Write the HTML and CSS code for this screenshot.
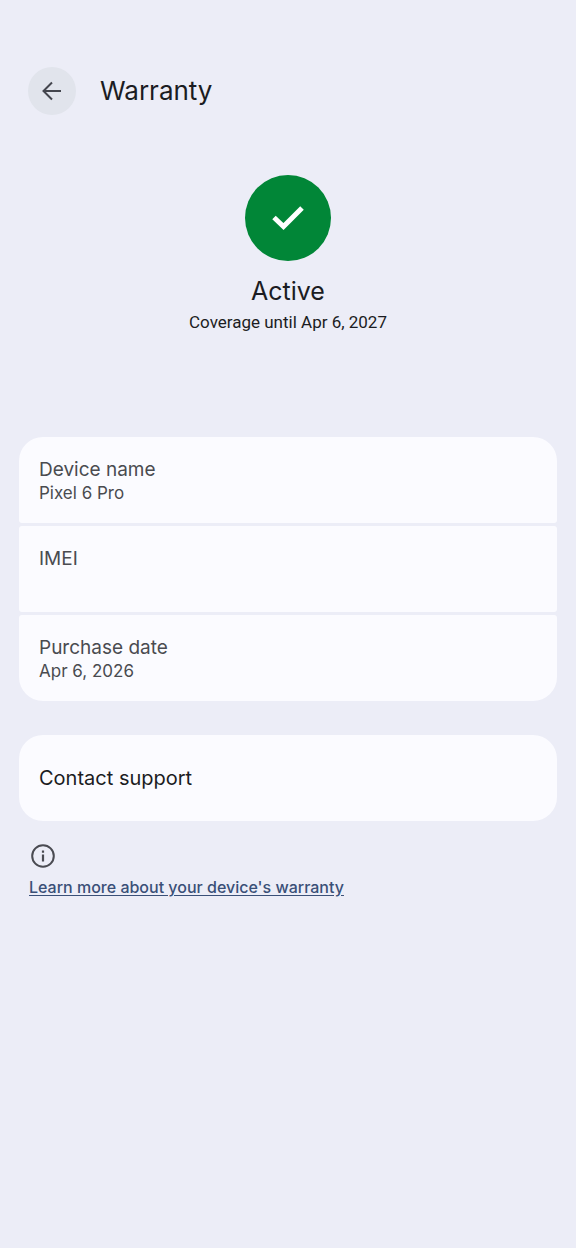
FILE: index.html
```html
<!DOCTYPE html>
<html lang="en">
<head>
<meta charset="utf-8">
<meta name="viewport" content="width=device-width, initial-scale=1">
<title>Warranty</title>
<link rel="stylesheet" href="styles.css">
</head>
<body>
<header class="app-bar">
  <button class="back" type="button" aria-label="Back">
    <svg viewBox="0 0 20 20" width="20" height="20" aria-hidden="true"><path d="M19 10H2M10 1.500 1.500 10l8.500 8.500"/></svg>
  </button>
  <h1 class="title">Warranty</h1>
</header>
<main class="content">
  <section class="status">
    <span class="badge">
      <svg viewBox="0 0 32 24" width="32" height="24" aria-hidden="true"><path d="M2 11.500 11.500 20.500 30 2"/></svg>
    </span>
    <h2 class="status-name">Active</h2>
    <p class="status-detail">Coverage until Apr 6, 2027</p>
  </section>
  <dl class="details">
    <div class="row"><dt class="label">Device name</dt><dd class="value">Pixel 6 Pro</dd></div>
    <div class="row"><dt class="label">IMEI</dt><dd class="value"></dd></div>
    <div class="row"><dt class="label">Purchase date</dt><dd class="value">Apr 6, 2026</dd></div>
  </dl>
  <button class="support" type="button">Contact support</button>
  <footer class="more">
    <svg class="info" viewBox="0 0 24 24" width="24" height="24" aria-hidden="true"><circle class="ring" cx="12" cy="12" r="10.800"/><path d="M10.900 10.500h2.200v7h-2.200zM10.900 6.500h2.200v2.200h-2.200z"/></svg>
    <a class="link" href="#">Learn more about your device's warranty</a>
  </footer>
</main>
</body>
</html>
```
FILE: styles.css
```css
* {
  box-sizing: border-box;
}

body {
  margin: 0;
  background: #ecedf7;
  color: #1b1c22;
  font-family: Inter, Roboto, sans-serif;
}

h1, h2, p, dl, dd {
  margin: 0;
  font-weight: 400;
}

button {
  border: 0;
  font-family: inherit;
  cursor: pointer;
}

.app-bar {
  display: flex;
  align-items: center;
  gap: 24px;
  padding: 67px 28px 0;
}

.back {
  display: grid;
  place-items: center;
  width: 48px;
  height: 48px;
  padding: 0;
  border-radius: 50%;
  background: #e1e4ec;
}

.back svg {
  fill: none;
  stroke: #44464e;
  stroke-width: 2;
}

.title {
  font-size: 26px;
  line-height: 32px;
}

.content {
  display: flex;
  flex-direction: column;
  padding: 60px 19px 0;
}

.status {
  display: flex;
  flex-direction: column;
  align-items: center;
}

.badge {
  display: grid;
  place-items: center;
  width: 86px;
  height: 86px;
  margin-bottom: 14px;
  border-radius: 50%;
  background: #018637;
}

.badge svg {
  fill: none;
  stroke: #fff;
  stroke-width: 5;
}

.status-name {
  font-size: 25px;
  line-height: 32px;
}

.status-detail {
  font-family: Roboto, sans-serif;
  font-size: 17px;
  line-height: 30px;
}

.details {
  display: flex;
  flex-direction: column;
  gap: 3px;
  margin-top: 100px;
  border-radius: 24px;
  overflow: hidden;
}

.row {
  min-height: 86px;
  padding: 21px 20px 19px;
  border-radius: 3px;
  background: #fbfbff;
  color: #4a4b50;
}

.label {
  font-size: 19px;
  line-height: 24px;
}

.value {
  font-size: 17px;
  line-height: 22px;
}

.support {
  min-height: 86px;
  margin-top: 34px;
  padding: 20px;
  border-radius: 24px;
  background: #fbfbff;
  color: #1b1c22;
  font-size: 20px;
  text-align: left;
}

.more {
  display: flex;
  flex-direction: column;
  align-items: flex-start;
  gap: 8px;
  padding: 23px 10px;
}

.info {
  margin-left: 2px;
  fill: #4a4b52;
}

.ring {
  fill: none;
  stroke: #4a4b52;
  stroke-width: 2;
}

.link {
  color: #3a5078;
  font-size: 16px;
  font-weight: 500;
  line-height: 22px;
  text-underline-offset: 2px;
}
```
